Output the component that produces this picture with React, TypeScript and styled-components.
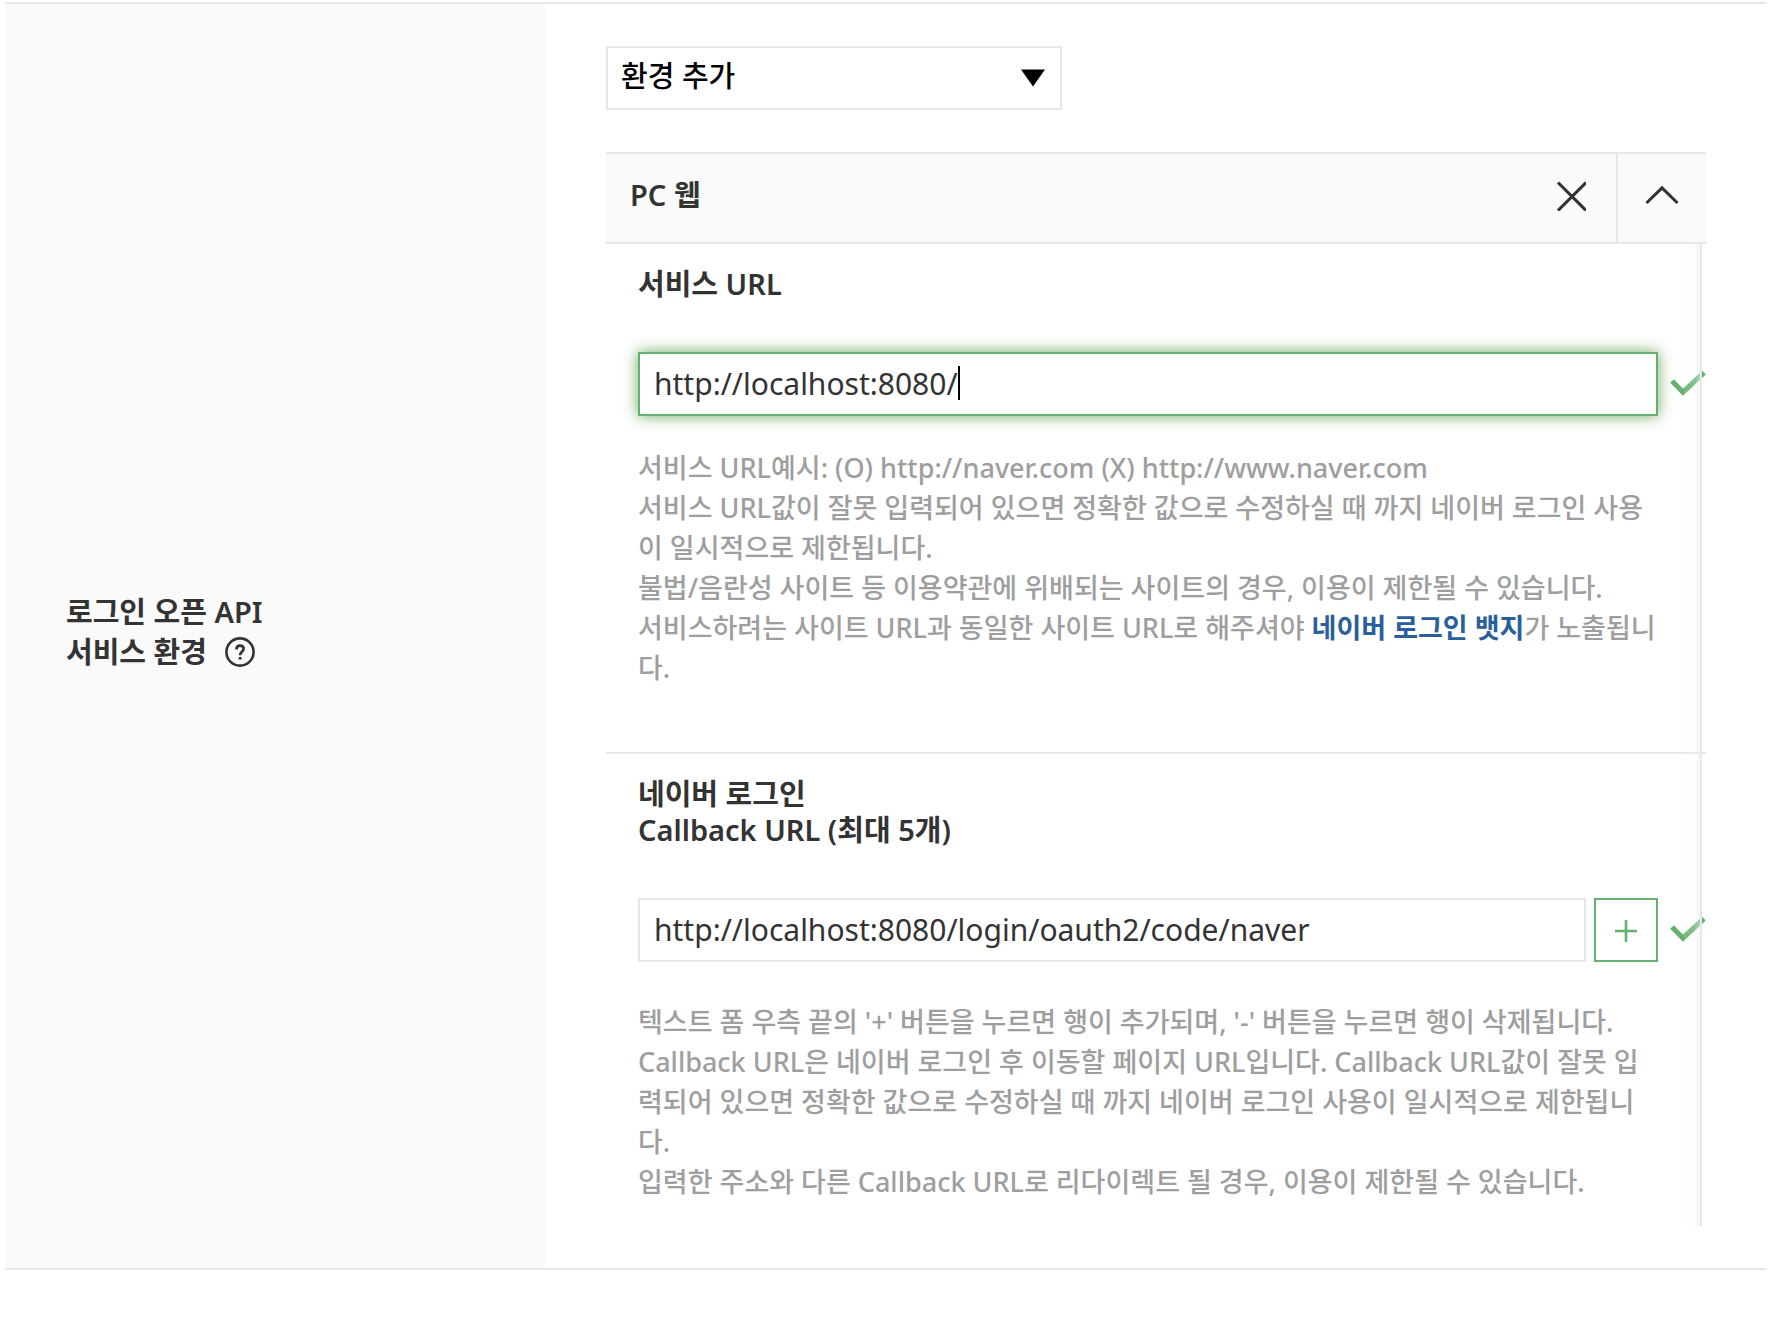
import React, { useState } from "react";
import styled, { createGlobalStyle, css } from "styled-components";

const color = {
  ink: "#333333",
  muted: "#9e9e9e",
  line: "#e6e7e8",
  shade: "#fafafa",
  green: "#65b170",
  link: "#2a5f9b",
};

const GlobalStyle = createGlobalStyle`
  *, *::before, *::after { box-sizing: border-box; }
  body {
    margin: 0;
    background: #fff;
    color: ${color.ink};
    font-family: "Noto Sans", "Noto Sans CJK KR", sans-serif;
    font-size: 29px;
  }
  button, input, select { font: inherit; color: inherit; }
`;

const Page = styled.main`
  padding: 2px 16px 48px 6px;
`;

const FormRow = styled.section`
  display: flex;
  border-top: 2px solid ${color.line};
  border-bottom: 2px solid ${color.line};
`;

const RowLabel = styled.h2`
  display: flex;
  flex: 0 0 540px;
  flex-direction: column;
  justify-content: center;
  margin: 0;
  padding: 0 60px 8px;
  background: ${color.shade};
  font-size: 29px;
  font-weight: 600;
  line-height: 40px;
`;

const LabelLine = styled.span`
  display: flex;
  align-items: center;
  gap: 18px;
`;

const IconButton = styled.button`
  display: flex;
  align-items: center;
  justify-content: center;
  padding: 0;
  border: 0;
  background: none;
  cursor: pointer;
`;

const RowContent = styled.div`
  flex: 1;
  min-width: 0;
  padding: 42px 60px;
`;

const SelectWrap = styled.div`
  display: flex;
  align-items: center;
  position: relative;
  width: 456px;
  height: 64px;
  margin-bottom: 42px;
`;

const EnvSelect = styled.select`
  width: 100%;
  height: 100%;
  padding: 0 56px 6px 13px;
  appearance: none;
  border: 2px solid ${color.line};
  border-radius: 0;
  background: #fff;
  color: #000;
  font-weight: 500;
`;

const SelectArrow = styled.svg`
  position: absolute;
  right: 17px;
  pointer-events: none;
`;

const PanelHeader = styled.header`
  display: flex;
  align-items: stretch;
  height: 92px;
  border-top: 2px solid ${color.line};
  border-bottom: 2px solid ${color.line};
  background: ${color.shade};
`;

const PanelTitle = styled.h3`
  flex: 1;
  margin: 0;
  padding-left: 24px;
  font-size: 29px;
  font-weight: 600;
  line-height: 82px;
`;

const HeaderButton = styled(IconButton)<{ $divided?: boolean }>`
  width: 90px;
  padding-bottom: 4px;
  ${(p) => p.$divided && css`border-left: 2px solid ${color.line};`}
`;

const PanelBody = styled.div`
  position: relative;
`;

const EdgeFade = styled.div`
  position: absolute;
  top: 0;
  right: 4px;
  bottom: 0;
  width: 18px;
  border-right: 2px solid ${color.line};
  background: linear-gradient(to right, rgba(250, 250, 250, 0.1), rgba(246, 247, 248, 0.2) 60%, rgba(236, 238, 240, 0.55));
  pointer-events: none;
`;

const Section = styled.section<{ $last?: boolean }>`
  padding: 22px 0 ${(p) => (p.$last ? 24 : 64)}px 32px;
  border-bottom: ${(p) => (p.$last ? "0" : `2px solid ${color.line}`)};
`;

const SectionTitle = styled.label`
  display: block;
  margin-bottom: 50px;
  font-weight: 600;
  line-height: 36px;
`;

const FieldRow = styled.div`
  display: flex;
  gap: 8px;
  height: 64px;
  padding-right: 48px;
  position: relative;
`;

const InputBox = styled.div<{ $active?: boolean }>`
  display: flex;
  flex: 1;
  align-items: center;
  min-width: 0;
  padding: 0 14px 2px;
  border: 2px solid ${(p) => (p.$active ? color.green : color.line)};
  background: #fff;
  box-shadow: ${(p) => (p.$active ? "0 0 14px rgba(90, 155, 65, 0.85)" : "none")};
`;

const TextInput = styled.input<{ $fit?: boolean }>`
  min-width: 0;
  padding: 0;
  border: 0;
  outline: 0;
  background: none;
  font-size: 30px;
  ${(p) => (p.$fit ? css`field-sizing: content;` : css`flex: 1;`)}
`;

const Caret = styled.span`
  width: 2px;
  height: 34px;
  background: #000;
`;

const AddButton = styled(IconButton)`
  flex: 0 0 64px;
  border: 2px solid ${color.green};
  background: #fff;
`;

const ValidMark = styled.svg`
  position: absolute;
  top: 0;
  right: 0;
`;

const Help = styled.p<{ $roomy?: boolean }>`
  margin: ${(p) => (p.$roomy ? 40 : 32)}px 0 0;
  color: ${color.muted};
  font-size: 27px;
  font-weight: 500;
  line-height: 40px;
  white-space: nowrap;
`;

const BadgeLink = styled.a`
  color: ${color.link};
  font-weight: 700;
  text-decoration: none;
`;

const Valid = () => (
  <ValidMark width="48" height="64" viewBox="0 0 48 64" fill="none" role="img" aria-label="확인됨">
    <path d="M14 29L25 40.2L46 20.6" stroke={color.green} strokeWidth="5.2" />
  </ValidMark>
);

export default function App() {
  const [serviceUrl, setServiceUrl] = useState("http://localhost:8080/");
  const [callbackUrl, setCallbackUrl] = useState("http://localhost:8080/login/oauth2/code/naver");

  return (
    <>
      <GlobalStyle />
      <Page>
        <FormRow>
          <RowLabel>
            <LabelLine>로그인 오픈 API</LabelLine>
            <LabelLine>
              서비스 환경
              <IconButton type="button" aria-label="도움말">
                <svg width="30" height="30" viewBox="0 0 30 30" fill="none" stroke={color.ink}>
                  <circle cx="15" cy="15" r="13.6" strokeWidth="2.6" />
                  <path d="M11.5 12.4C11.500 9.800 12.900 8.600 15 8.600s3.600 1.200 3.600 3.200c0 2.800-3.500 3-3.500 6.400" strokeWidth="2.7" />
                  <circle cx="15.1" cy="21.3" r="1.5" fill={color.ink} stroke="none" />
                </svg>
              </IconButton>
            </LabelLine>
          </RowLabel>

          <RowContent>
            <SelectWrap>
              <EnvSelect aria-label="환경 추가" defaultValue="add">
                <option value="add">환경 추가</option>
              </EnvSelect>
              <SelectArrow width="24" height="18" viewBox="0 0 24 18">
                <path d="M0 0.5H24L12 17.5Z" fill="#000" />
              </SelectArrow>
            </SelectWrap>

            <PanelHeader>
              <PanelTitle>PC 웹</PanelTitle>
              <HeaderButton type="button" aria-label="삭제">
                <svg width="30" height="30" viewBox="0 0 30 30" fill="none" stroke={color.ink} strokeWidth="3.1">
                  <path d="M2 1.500L30 29.500M30 1.500L2 29.500" />
                </svg>
              </HeaderButton>
              <HeaderButton type="button" aria-label="접기" $divided>
                <svg width="34" height="24" viewBox="0 0 34 24" fill="none" stroke={color.ink} strokeWidth="3.1">
                  <path d="M1.500 19L17 4L32.500 19" />
                </svg>
              </HeaderButton>
            </PanelHeader>

            <PanelBody>
              <Section>
                <SectionTitle htmlFor="service-url">서비스 URL</SectionTitle>
                <FieldRow>
                  <InputBox $active>
                    <TextInput
                      id="service-url"
                      type="text"
                      $fit
                      value={serviceUrl}
                      onChange={(e) => setServiceUrl(e.target.value)}
                    />
                    <Caret />
                  </InputBox>
                  <Valid />
                </FieldRow>
                <Help>
                  서비스 URL예시: (O) http://naver.com (X) http://www.naver.com
                  <br />
                  서비스 URL값이 잘못 입력되어 있으면 정확한 값으로 수정하실 때 까지 네이버 로그인 사용
                  <br />
                  이 일시적으로 제한됩니다.
                  <br />
                  불법/음란성 사이트 등 이용약관에 위배되는 사이트의 경우, 이용이 제한될 수 있습니다.
                  <br />
                  서비스하려는 사이트 URL과 동일한 사이트 URL로 해주셔야{" "}
                  <BadgeLink href="#badge">네이버 로그인 뱃지</BadgeLink>가 노출됩니
                  <br />
                  다.
                </Help>
              </Section>

              <Section $last>
                <SectionTitle htmlFor="callback-url">
                  네이버 로그인
                  <br />
                  Callback URL (최대 5개)
                </SectionTitle>
                <FieldRow>
                  <InputBox>
                    <TextInput
                      id="callback-url"
                      type="text"
                      value={callbackUrl}
                      onChange={(e) => setCallbackUrl(e.target.value)}
                    />
                  </InputBox>
                  <AddButton type="button" aria-label="행 추가">
                    <svg width="24" height="24" viewBox="0 0 24 24" stroke={color.green} strokeWidth="2.6">
                      <path d="M1 13H23M12 2V24" />
                    </svg>
                  </AddButton>
                  <Valid />
                </FieldRow>
                <Help $roomy>
                  텍스트 폼 우측 끝의 '+' 버튼을 누르면 행이 추가되며, '-' 버튼을 누르면 행이 삭제됩니다.
                  <br />
                  Callback URL은 네이버 로그인 후 이동할 페이지 URL입니다. Callback URL값이 잘못 입
                  <br />
                  력되어 있으면 정확한 값으로 수정하실 때 까지 네이버 로그인 사용이 일시적으로 제한됩니
                  <br />
                  다.
                  <br />
                  입력한 주소와 다른 Callback URL로 리다이렉트 될 경우, 이용이 제한될 수 있습니다.
                </Help>
              </Section>
              <EdgeFade />
            </PanelBody>
          </RowContent>
        </FormRow>
      </Page>
    </>
  );
}
